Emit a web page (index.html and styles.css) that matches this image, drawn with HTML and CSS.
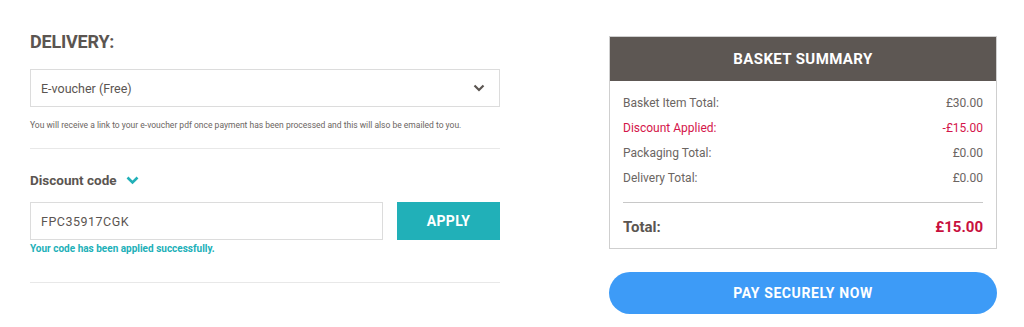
FILE: index.html
```html
<!DOCTYPE html>
<html lang="en">
<head>
<meta charset="utf-8">
<title>Checkout</title>
<link rel="stylesheet" href="styles.css">
</head>
<body>
<div class="page">
  <section class="left">
    <h2 class="heading">DELIVERY:</h2>
    <div class="select">
      <span>E-voucher (Free)</span>
      <svg class="chev" width="12" height="8" viewBox="0 0 12 8"><path d="M1.5 1.5 L6 6 L10.5 1.5" fill="none" stroke="#5b5551" stroke-width="2.2"/></svg>
    </div>
    <p class="note">You will receive a link to your e-voucher pdf once payment has been processed and this will also be emailed to you.</p>
    <div class="divider"></div>
    <div class="discount-title">
      <span>Discount code</span>
      <svg class="chev-teal" width="13" height="9" viewBox="0 0 13 9"><path d="M1.5 1.5 L6.5 6.5 L11.5 1.5" fill="none" stroke="#21b0b8" stroke-width="2.6"/></svg>
    </div>
    <div class="code-row">
      <div class="code-input">FPC35917CGK</div>
      <button class="apply">APPLY</button>
    </div>
    <p class="success">Your code has been applied successfully.</p>
    <div class="divider bottom"></div>
  </section>
  <aside class="right">
    <div class="summary">
      <div class="summary-head">BASKET SUMMARY</div>
      <div class="summary-body">
        <div class="row"><span>Basket Item Total:</span><span>£30.00</span></div>
        <div class="row red"><span>Discount Applied:</span><span>-£15.00</span></div>
        <div class="row"><span>Packaging Total:</span><span>£0.00</span></div>
        <div class="row"><span>Delivery Total:</span><span>£0.00</span></div>
        <div class="total"><span>Total:</span><span class="total-val">£15.00</span></div>
      </div>
    </div>
    <button class="pay">PAY SECURELY NOW</button>
  </aside>
</div>
</body>
</html>
```
FILE: styles.css
```css
* { box-sizing: border-box; }
body {
  margin: 0;
  background: #fff;
  font-family: Roboto, "Liberation Sans", sans-serif;
  color: #5b5551;
}
.page {
  display: flex;
  padding-left: 30px;
  gap: 109px;
}
.left {
  width: 470px;
  padding-top: 31px;
}
.heading {
  margin: 0;
  font-size: 18px;
  font-weight: 700;
  line-height: 22px;
  letter-spacing: -0.2px;
  color: #5b5551;
}
.select {
  margin-top: 16px;
  height: 38px;
  border: 1px solid #dcdcdc;
  display: flex;
  align-items: center;
  justify-content: space-between;
  padding: 0 14px 0 10px;
  font-size: 12.5px;
  color: #5b5551;
}
.note {
  margin: 12px 0 0;
  font-size: 8.5px;
  line-height: 12px;
  color: #6b6562;
}
.divider {
  margin-top: 17px;
  height: 1px;
  background: #e8e8e8;
}
.discount-title {
  margin-top: 22px;
  display: flex;
  align-items: center;
  gap: 9px;
  font-size: 13.5px;
  font-weight: 700;
  line-height: 18px;
}
.code-row {
  margin-top: 13px;
  display: flex;
  gap: 14px;
}
.code-input {
  width: 353px;
  height: 38px;
  border: 1px solid #dcdcdc;
  display: flex;
  align-items: center;
  padding-left: 10px;
  font-size: 12.5px;
  letter-spacing: 0.5px;
}
.apply {
  flex: 1;
  height: 38px;
  border: 0;
  background: #21b0b8;
  color: #fff;
  font-family: inherit;
  font-size: 14px;
  font-weight: 700;
  letter-spacing: 0.3px;
}
.success {
  margin: 3px 0 0;
  font-size: 10px;
  line-height: 12px;
  font-weight: 700;
  letter-spacing: 0;
  color: #21b0b8;
}
.divider.bottom { margin-top: 27px; }
.right {
  width: 388px;
  padding-top: 36px;
}
.summary {
  border: 1px solid #cfcfcf;
}
.summary-head {
  height: 44px;
  background: #5d5753;
  color: #fff;
  display: flex;
  align-items: center;
  justify-content: center;
  font-size: 15px;
  font-weight: 700;
  letter-spacing: 0.4px;
}
.summary-body {
  padding: 9px 13px 0;
}
.row {
  display: flex;
  justify-content: space-between;
  height: 25px;
  align-items: center;
  font-size: 12px;
  color: #6b6562;
}
.row.red { color: #d4154a; }
.total {
  margin-top: 12px;
  border-top: 1px solid #c8c8c8;
  height: 46px;
  padding-top: 2px;
  display: flex;
  justify-content: space-between;
  align-items: center;
  font-size: 15px;
  font-weight: 700;
  color: #5b5551;
}
.total-val { color: #c8103e; }
.pay {
  margin-top: 23px;
  width: 100%;
  height: 42px;
  border: 0;
  border-radius: 21px;
  background: #3d9bf7;
  color: #fff;
  font-family: inherit;
  font-size: 14px;
  font-weight: 700;
  letter-spacing: 0.6px;
}
```
